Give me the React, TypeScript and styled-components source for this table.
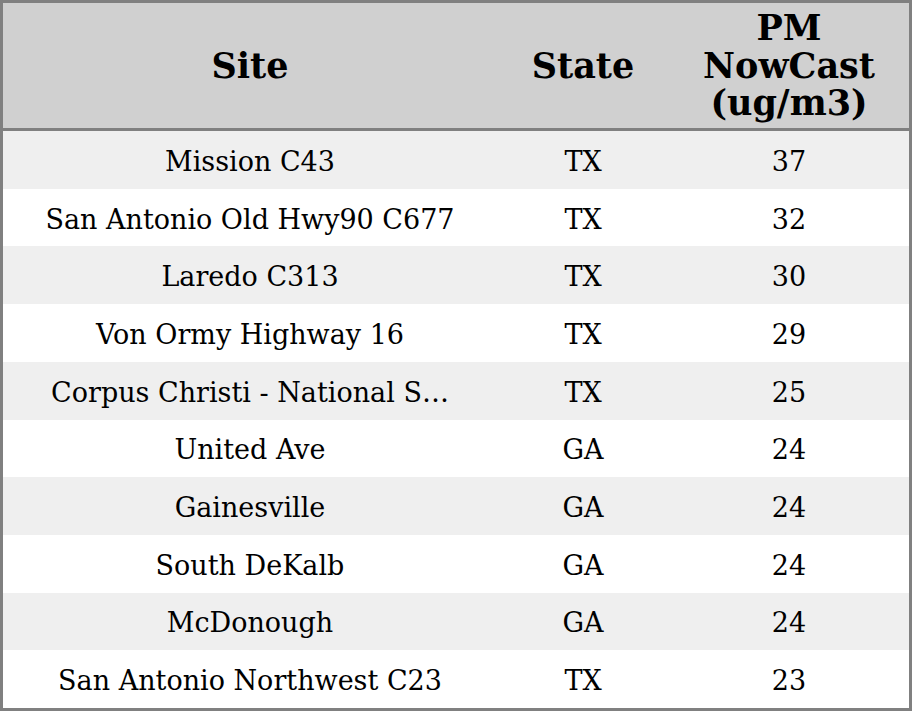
import React from "react";
import styled, { createGlobalStyle } from "styled-components";

const GlobalStyle = createGlobalStyle`
  html, body {
    margin: 0;
    padding: 0;
    background: #ffffff;
  }
`;

const Table = styled.div`
  box-sizing: border-box;
  width: 912px;
  height: 711px;
  border: 3px solid #808080;
  display: flex;
  flex-direction: column;
  font-family: "DejaVu Serif", serif;
  color: #000000;
`;

const HeaderRow = styled.div`
  display: grid;
  grid-template-columns: 494px 172px 240px;
  height: 125px;
  background: #d0d0d0;
  border-bottom: 3px solid #808080;
`;

const HeaderCell = styled.div`
  display: flex;
  align-items: center;
  justify-content: center;
  text-align: center;
  font-weight: bold;
  font-size: 35px;
  line-height: 37.5px;
`;

const Row = styled.div<{ $shaded: boolean }>`
  display: grid;
  grid-template-columns: 494px 172px 240px;
  flex: 1;
  background: ${(p) => (p.$shaded ? "#efefef" : "#ffffff")};
`;

const Cell = styled.div`
  display: flex;
  align-items: center;
  justify-content: center;
  box-sizing: border-box;
  padding-top: 3px;
  font-size: 27px;
  white-space: nowrap;
  min-width: 0;
`;

const MAX_SITE = 27;

const truncate = (s: string) =>
  s.length > MAX_SITE ? s.slice(0, MAX_SITE) + "…" : s;

const rows = [
  { site: "Mission C43", state: "TX", pm: 37 },
  { site: "San Antonio Old Hwy90 C677", state: "TX", pm: 32 },
  { site: "Laredo C313", state: "TX", pm: 30 },
  { site: "Von Ormy Highway 16", state: "TX", pm: 29 },
  { site: "Corpus Christi - National Seashore", state: "TX", pm: 25 },
  { site: "United Ave", state: "GA", pm: 24 },
  { site: "Gainesville", state: "GA", pm: 24 },
  { site: "South DeKalb", state: "GA", pm: 24 },
  { site: "McDonough", state: "GA", pm: 24 },
  { site: "San Antonio Northwest C23", state: "TX", pm: 23 },
];

export default function App() {
  return (
    <>
      <GlobalStyle />
      <Table>
        <HeaderRow>
          <HeaderCell>Site</HeaderCell>
          <HeaderCell>State</HeaderCell>
          <HeaderCell>
            PM
            <br />
            NowCast
            <br />
            (ug/m3)
          </HeaderCell>
        </HeaderRow>
        {rows.map((r, i) => (
          <Row key={r.site} $shaded={i % 2 === 0}>
            <Cell title={r.site}>{truncate(r.site)}</Cell>
            <Cell>{r.state}</Cell>
            <Cell>{r.pm}</Cell>
          </Row>
        ))}
      </Table>
    </>
  );
}
